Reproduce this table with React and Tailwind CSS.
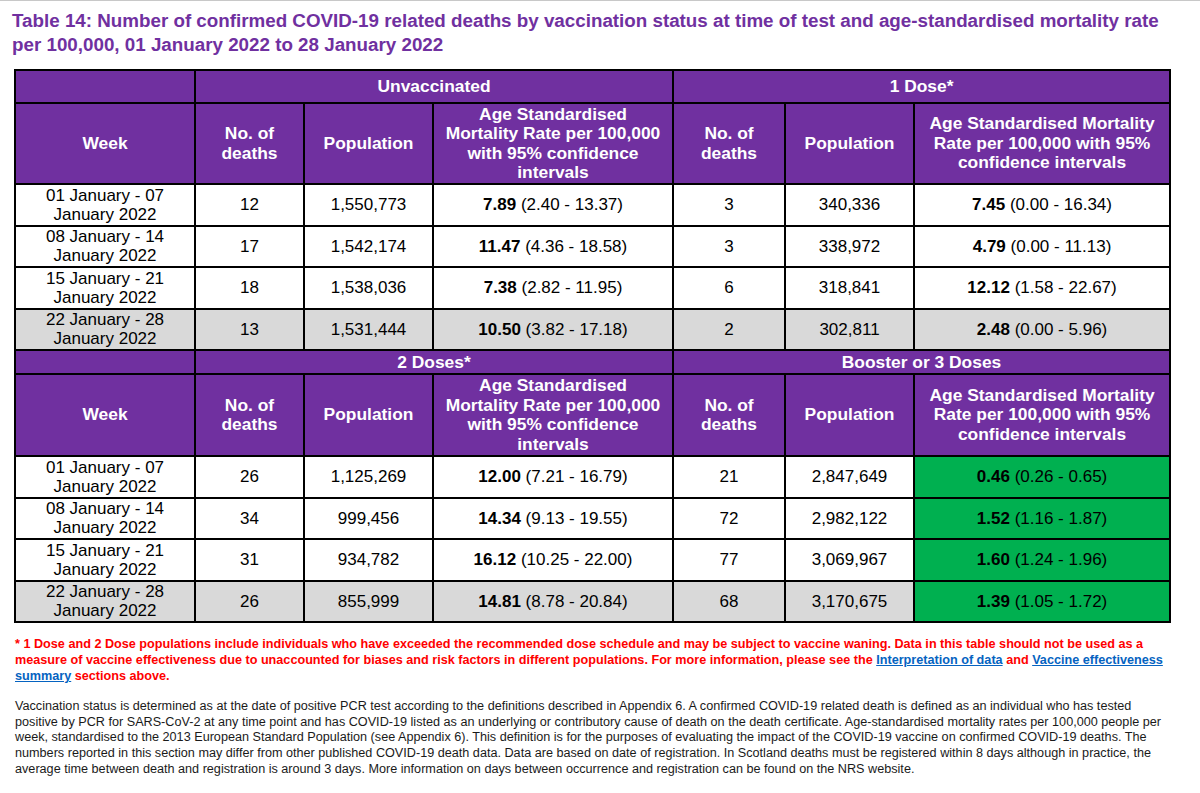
const PURPLE = "bg-[#7030a0]";

const topRows = [
  ["01 January - 07", "12", "1,550,773", "7.89", "(2.40 - 13.37)", "3", "340,336", "7.45", "(0.00 - 16.34)"],
  ["08 January - 14", "17", "1,542,174", "11.47", "(4.36 - 18.58)", "3", "338,972", "4.79", "(0.00 - 11.13)"],
  ["15 January - 21", "18", "1,538,036", "7.38", "(2.82 - 11.95)", "6", "318,841", "12.12", "(1.58 - 22.67)"],
  ["22 January - 28", "13", "1,531,444", "10.50", "(3.82 - 17.18)", "2", "302,811", "2.48", "(0.00 - 5.96)"],
];

const bottomRows = [
  ["01 January - 07", "26", "1,125,269", "12.00", "(7.21 - 16.79)", "21", "2,847,649", "0.46", "(0.26 - 0.65)"],
  ["08 January - 14", "34", "999,456", "14.34", "(9.13 - 19.55)", "72", "2,982,122", "1.52", "(1.16 - 1.87)"],
  ["15 January - 21", "31", "934,782", "16.12", "(10.25 - 22.00)", "77", "3,069,967", "1.60", "(1.24 - 1.96)"],
  ["22 January - 28", "26", "855,999", "14.81", "(8.78 - 20.84)", "68", "3,170,675", "1.39", "(1.05 - 1.72)"],
];

const cell = "border-2 border-black text-center align-middle p-0";
const head = `${cell} ${PURPLE} text-white font-bold text-[17.4px]`;

function GroupHeader({ left, right, h }) {
  return (
    <tr className="leading-[19px]">
      <td className={`${head} ${h}`}></td>
      <td colSpan={3} className={`${head} ${h}`}>{left}</td>
      <td colSpan={3} className={`${head} ${h}`}>{right}</td>
    </tr>
  );
}

function SubHeader({ h }) {
  return (
    <tr className="leading-[19.5px]">
      <td className={`${head} ${h}`}>Week</td>
      <td className={head}>No. of<br />deaths</td>
      <td className={head}>Population</td>
      <td className={head}>
        Age Standardised<br />Mortality Rate per 100,000<br />with 95% confidence<br />intervals
      </td>
      <td className={head}>No. of<br />deaths</td>
      <td className={head}>Population</td>
      <td className={head}>
        Age Standardised Mortality<br />Rate per 100,000 with 95%<br />confidence intervals
      </td>
    </tr>
  );
}

function DataRows({ rows, green }) {
  return rows.map((r, i) => {
    const last = i === rows.length - 1;
    const bg = last ? "bg-[#d9d9d9]" : "bg-white";
    return (
      <tr key={i} className="leading-[19px] text-black text-[17px]">
        <td className={`${cell} ${bg} h-[41.5px]`}>
          {r[0]}
          <br />
          January 2022
        </td>
        <td className={`${cell} ${bg}`}>{r[1]}</td>
        <td className={`${cell} ${bg}`}>{r[2]}</td>
        <td className={`${cell} ${bg}`}>
          <b>{r[3]}</b> {r[4]}
        </td>
        <td className={`${cell} ${bg}`}>{r[5]}</td>
        <td className={`${cell} ${bg}`}>{r[6]}</td>
        <td className={`${cell} ${green ? "bg-[#00b050]" : bg}`}>
          <b>{r[7]}</b> {r[8]}
        </td>
      </tr>
    );
  });
}

const bodyLines = [
  "Vaccination status is determined as at the date of positive PCR test according to the definitions described in Appendix 6. A confirmed COVID-19 related death is defined as an individual who has tested",
  "positive by PCR for SARS-CoV-2 at any time point and has COVID-19 listed as an underlying or contributory cause of death on the death certificate. Age-standardised mortality rates per 100,000 people per",
  "week, standardised to the 2013 European Standard Population (see Appendix 6). This definition is for the purposes of evaluating the impact of the COVID-19 vaccine on confirmed COVID-19 deaths. The",
  "numbers reported in this section may differ from other published COVID-19 death data. Data are based on date of registration. In Scotland deaths must be registered within 8 days although in practice, the",
  "average time between death and registration is around 3 days. More information on days between occurrence and registration can be found on the NRS website.",
];

export default function App() {
  return (
    <div className="w-[1200px] h-[793px] overflow-hidden bg-white border-t border-[#c8c8c8] font-['Liberation_Sans',Arial,sans-serif]">
      {/* title */}
      <h1 className="pl-[12px] pt-[8px] text-[18.8px] leading-[24px] font-bold text-[#7030a0]">
        Table 14: Number of confirmed COVID-19 related deaths by vaccination status at time of test and age-standardised mortality rate
        <br />
        per 100,000, 01 January 2022 to 28 January 2022
      </h1>

      <table className="ml-[14px] mt-[12px] w-[1155px] table-fixed border-collapse">
        <colgroup>
          <col className="w-[180px]" />
          <col className="w-[109px]" />
          <col className="w-[129px]" />
          <col className="w-[240px]" />
          <col className="w-[112px]" />
          <col className="w-[129px]" />
          <col className="w-[256px]" />
        </colgroup>
        <tbody>
          <GroupHeader left="Unvaccinated" right="1 Dose*" h="h-[33px]" />
          <SubHeader h="h-[81px]" />
          <DataRows rows={topRows} />
          <GroupHeader left="2 Doses*" right="Booster or 3 Doses" h="h-[24px]" />
          <SubHeader h="h-[82px]" />
          <DataRows rows={bottomRows} green />
        </tbody>
      </table>

      {/* red note */}
      <div className="pl-[15px] mt-[13px] text-[12.65px] leading-[16px] font-bold text-[#ff0000] whitespace-nowrap">
        <div>
          * 1 Dose and 2 Dose populations include individuals who have exceeded the recommended dose schedule and may be subject to vaccine waning. Data in this table should not be used as a
        </div>
        <div>
          measure of vaccine effectiveness due to unaccounted for biases and risk factors in different populations. For more information, please see the{" "}
          <a className="text-[#0563c1] underline">Interpretation of data</a> and{" "}
          <a className="text-[#0563c1] underline">Vaccine effectiveness</a>
        </div>
        <div>
          <a className="text-[#0563c1] underline">summary</a> sections above.
        </div>
      </div>

      {/* notes */}
      <div className="pl-[15px] mt-[15px] text-[12.65px] leading-[15.7px] text-[#1a1a1a] whitespace-nowrap">
        {bodyLines.map((l, i) => (
          <div key={i}>{l}</div>
        ))}
      </div>
    </div>
  );
}
